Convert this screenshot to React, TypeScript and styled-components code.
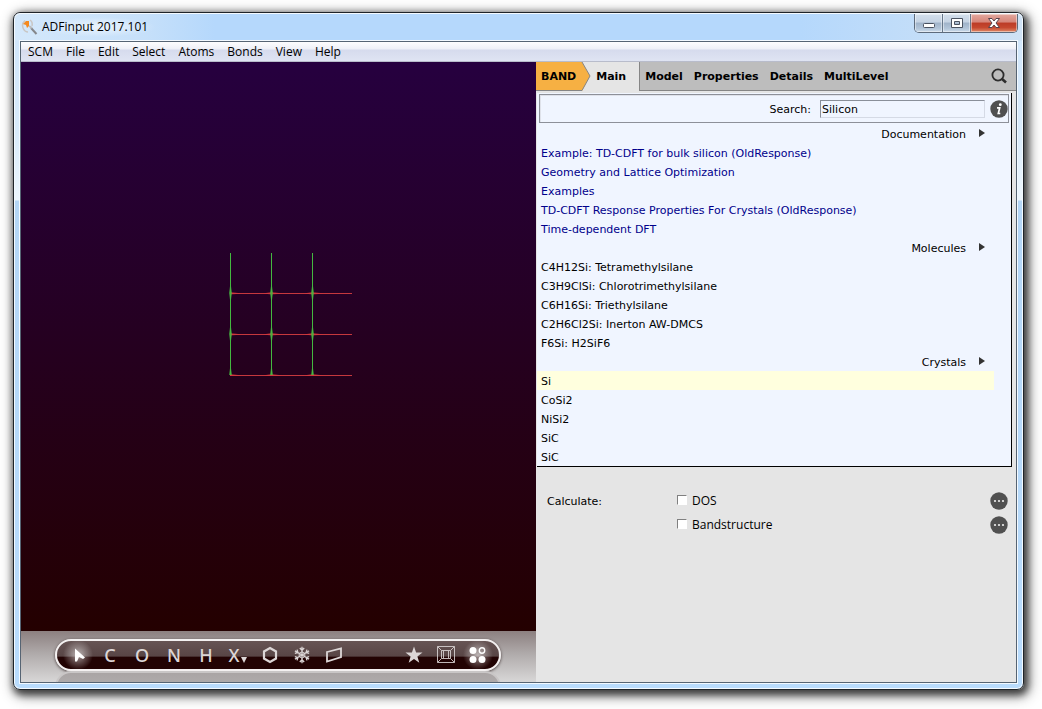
import React, { useState } from 'react';
import styled, { createGlobalStyle, css } from 'styled-components';

const GlobalStyle = createGlobalStyle`
  * { box-sizing: border-box; }
  body { margin: 0; background: #fff; }
  button, input { font: inherit; color: inherit; }
  button { border: 0; padding: 0; background: none; cursor: default; }
  ul { list-style: none; margin: 0; padding: 0; }
`;

const ui = "'Open Sans', 'Noto Sans', sans-serif";
const verdana = "'DejaVu Sans', sans-serif";

const Desktop = styled.div`
  display: flex;
  min-height: 100vh;
  padding: 12px 18px 19px 13px;
  color: #000;
`;

const Window = styled.div`
  flex: 1;
  display: flex;
  flex-direction: column;
  padding: 0 6px 6px;
  border: 1px solid #1f2429;
  border-radius: 7px;
  background: linear-gradient(#cfe5fb 0, #d9ebfb 120px, #edf6fd 187px, #b4d6f6 188px, #b9dcfd 100%);
  box-shadow: inset 0 0 0 1px #f4faff, 2px 3px 7px 2px rgba(0, 0, 0, 0.6), 3px 4px 14px 2px rgba(0, 0, 0, 0.45);
`;

const TitleBar = styled.header`
  display: flex;
  align-items: flex-start;
  height: 28px;
  margin: 0 -5px;
  padding: 0 4px 0 6px;
  border-top: 1px solid #f4faff;
  border-radius: 6px 6px 0 0;
  background: linear-gradient(90deg, #d4e8fb 0, #c6e0fa 130px, #b5d8fc 200px, #b5d8fc 78%, #cfe2f5 100%);
`;

const Title = styled.h1`
  flex: 1;
  display: flex;
  align-items: center;
  gap: 4px;
  margin: 0;
  height: 26px;
  font: 400 12px/20px ${ui};
  span { padding-right: 8px; background: radial-gradient(closest-side, rgba(255,255,255,.6), transparent); }
`;

const WindowButtons = styled.div`
  display: flex;
  height: 19px;
  border: 1px solid #5d6b7c;
  border-top: 0;
  border-radius: 0 0 5px 5px;
  overflow: hidden;
`;

const WindowButton = styled.button<{ $close?: boolean }>`
  display: grid;
  place-items: center;
  width: ${p => (p.$close ? 46 : 28)}px;
  border-right: ${p => (p.$close ? '0' : '1px solid #66778a')};
  background: ${p => p.$close
    ? 'linear-gradient(#e3a99f, #d68579 45%, #bc3b26 50%, #c5482f 75%, #e08a68)'
    : 'linear-gradient(#d3dfec, #c5d3e3 45%, #9fb3c9 50%, #b2c5d9 80%, #cbdbea)'};
  box-shadow: inset 0 0 0 1px rgba(255, 255, 255, 0.45);
`;

const Client = styled.div`
  flex: 1;
  display: flex;
  flex-direction: column;
  border: 1px solid #566473;
  background: #e5e5e5;
  outline: 1px solid #f2f9ff;
`;

const MenuBar = styled.nav`
  display: flex;
  gap: 13px;
  height: 20px;
  padding: 0 7px;
  border-bottom: 1px solid #b8bccb;
  background: linear-gradient(#fdfdfe, #eef0f7 7px, #d6dbed 8px, #dfe4f3);
  font: 12px/19px ${ui};
`;

const Workspace = styled.div`
  flex: 1;
  display: flex;
`;

const Viewer = styled.section`
  flex: 515 1 0;
  display: flex;
  flex-direction: column;
`;

const Scene = styled.div`
  flex: 1;
  display: flex;
  align-items: center;
  justify-content: center;
  padding: 0 0 66px 24px;
  background: linear-gradient(#26003f, #240000);
`;

const ToolArea = styled.div`
  height: 51px;
  padding: 8px 35px 0 34px;
  overflow: hidden;
  background: linear-gradient(#8c8080, #b0abab 45%, #d8d7d7);
`;

const pill = css`
  height: 32px;
  border: 2px solid #f4f1f1;
  border-radius: 16px;
`;

const ToolPill = styled.div`
  ${pill}
  display: flex;
  align-items: center;
  padding: 0 5px;
  background: linear-gradient(#665454, #584545 55%, #220303 56%, #220303);
  box-shadow: 0 1px 3px rgba(30, 15, 15, 0.7);
`;

const PillReflection = styled.div`
  ${pill}
  border-color: #c9c6c6;
  background: linear-gradient(#aaa5a5, #b8b4b4);
`;

const Tool = styled.button<{ $active?: boolean }>`
  display: flex;
  align-items: center;
  justify-content: center;
  flex: 0 0 32px;
  height: 28px;
  color: ${p => (p.$active ? '#fff' : '#dcd6d6')};
  font: 500 18px/28px 'Noto Sans', 'Open Sans', sans-serif;
  ${p => p.$active && 'background: radial-gradient(circle 15px, rgba(255,255,255,.6), rgba(255,255,255,.25) 55%, transparent);'}
`;

const ToolSpacer = styled.div`
  flex: 1;
`;

const Panel = styled.section`
  flex: 480 1 0;
  min-width: 0;
  font: 11px/19px ${verdana};
`;

const TabBar = styled.div`
  display: flex;
  height: 29px;
  background: #bdbdbd;
  border-bottom: 1px solid #858585;
  font-weight: 700;
`;

const Program = styled.button`
  display: flex;
  align-items: center;
  height: 29px;
  background: #e5e5e5;
  span {
    height: 29px;
    padding: 0 2px 0 5px;
    background: #f6b043;
    border-bottom: 1px solid #858585;
    line-height: 29px;
  }
`;

const Tab = styled.button<{ $active?: boolean }>`
  height: ${p => (p.$active ? 29 : 28)}px;
  padding: ${p => (p.$active ? '0 13px 0 5px' : '0 6px 0 5px')};
  ${p => p.$active && 'background: #e5e5e5; border-right: 1px solid #858585;'}
`;

const SearchTab = styled.button`
  margin: 0 9px 0 auto;
  height: 28px;
  svg { display: block; }
`;

const Results = styled.div`
  margin: 2px 4px 0 1px;
  padding-top: 1px;
  border-right: 1px solid #000;
  border-bottom: 1px solid #000;
  background: #f0f5ff;
  line-height: 21px;
`;

const SearchBox = styled.div`
  display: flex;
  align-items: center;
  justify-content: flex-end;
  height: 29px;
  margin: 0 2px 1px;
  border: 1px solid #8d9099;
  box-shadow: inset 1px 1px 0 #dfe2ea;
  label { padding-top: 1px; }
`;

const SearchInput = styled.input`
  width: 165px;
  height: 18px;
  margin: 0 5px 0 9px;
  padding: 1px 1px 0;
  border: 1px solid #d5dae5;
  border-top-color: #8a8f99;
  border-left-color: #8a8f99;
  border-radius: 0;
  background: #f0f5ff;
  line-height: 15px;
  outline: 0;
`;

const RoundButton = styled.button`
  width: 18px;
  height: 18px;
  svg { display: block; }
`;

const GroupTitle = styled.button`
  display: flex;
  align-items: flex-start;
  justify-content: flex-end;
  gap: 12px;
  width: 100%;
  height: 19px;
  padding-right: 25px;
`;

const Entry = styled.li<{ $current?: boolean }>`
  height: 19px;
  margin: 0 17px 0 0;
  padding-left: 4px;
  background: ${p => (p.$current ? '#ffffde' : 'transparent')};
`;

const DocLink = styled.a`
  color: #00008b;
  text-decoration: none;
`;

const Calculate = styled.fieldset`
  display: grid;
  grid-template-columns: 130px 1fr 18px;
  grid-auto-rows: 24px;
  align-items: center;
  margin: 0;
  padding: 22px 8px 0 11px;
  border: 0;
`;

const Check = styled.label`
  grid-column: 2;
  display: flex;
  align-items: center;
  gap: 5px;
  font: 12px/24px ${ui};
`;

const Box = styled.input`
  appearance: none;
  width: 10px;
  height: 10px;
  margin: 0 0 2px;
  border: 1px solid #fff;
  border-top-color: #808080;
  border-left-color: #808080;
  background: #fff;
  &:checked { background: #555; }
`;

const menus = ['SCM', 'File', 'Edit', 'Select', 'Atoms', 'Bonds', 'View', 'Help'];
const tabs = ['Model', 'Properties', 'Details', 'MultiLevel'];

const groups = [
  {
    title: 'Documentation',
    links: true,
    items: [
      'Example: TD-CDFT for bulk silicon (OldResponse)',
      'Geometry and Lattice Optimization',
      'Examples',
      'TD-CDFT Response Properties For Crystals (OldResponse)',
      'Time-dependent DFT',
    ],
  },
  {
    title: 'Molecules',
    items: [
      'C4H12Si: Tetramethylsilane',
      'C3H9ClSi: Chlorotrimethylsilane',
      'C6H16Si: Triethylsilane',
      'C2H6Cl2Si: Inerton AW-DMCS',
      'F6Si: H2SiF6',
    ],
  },
  { title: 'Crystals', items: ['Si', 'CoSi2', 'NiSi2', 'SiC', 'SiC'] },
];

const AppIcon = () => (
  <svg width="17" height="17" viewBox="0 0 17 17" aria-hidden="true">
    <path d="M4 1.500Q0 5 2.500 10Q4 13 7 13" fill="none" stroke="#c9c6c4" strokeWidth="1.500" />
    <path d="M9 1Q12 3 11 7" fill="none" stroke="#c9c6c4" strokeWidth="1.500" />
    <path d="M10 9L15.500 15" stroke="#85878b" strokeWidth="2" />
    <path d="M2 5L5 2H8V7L6 9L5 6Z" fill="#f58a1f" />
    <path d="M8 7L11 9" stroke="#bbb" strokeWidth="2" />
  </svg>
);

const Lattice = () => {
  const stops = [0, 41, 82];
  return (
    <svg width="124" height="124" viewBox="0 0 124 124" aria-label="Unit cell grid">
      {stops.map(s => (
        <g key={s}>
          <path d={`M1 ${s + 41.5}H123`} stroke="#c5383d" />
          <path d={`M${s + 1.5} 1V123`} stroke="#44b840" />
        </g>
      ))}
      {stops.map(x => stops.map(y => (
        <g key={`${x}-${y}`}>
          <path d={`M${Math.max(1, x - 7)} ${y + 41.5}L${x + 1.5} ${y + 40}L${x + 13} ${y + 41.5}L${x + 1.5} ${y + 42.5}Z`} fill="#d8383d" opacity=".65" />
          <path d={`M${x + 1.5} ${y + 31}L${x + 3} ${y + 41}L${x + 1.5} ${Math.min(123, y + 51)}L${x} ${y + 41}Z`} fill="#44b840" opacity=".75" />
        </g>
      )))}
    </svg>
  );
};

const glyph = { width: 18, height: 18, viewBox: '0 0 18 18', fill: 'none', stroke: 'currentColor', 'aria-hidden': true } as const;

const Cursor = () => (
  <svg {...glyph}><path d="M6 2.500L16 11.500L14 13L10 11L8 15.500H6Z" fill="currentColor" stroke="none" /></svg>
);
const Hexagon = () => (
  <svg {...glyph} strokeWidth="2.200"><path d="M9 2L15 5.500V12.500L9 16L3 12.500V5.500Z" /></svg>
);
const Snowflake = () => (
  <svg {...glyph} strokeWidth="1.300">
    {[0, 60, 120, 180, 240, 300].map(a => (
      <path key={a} transform={`rotate(${a} 9 9)`} d="M9 9V.8M6.800 2L9 4.300L11.200 2" />
    ))}
    <path d="M9 5.800L11.800 7.400V10.600L9 12.200L6.200 10.600V7.400Z" strokeWidth="1" />
  </svg>
);
const Plane = () => (
  <svg {...glyph} strokeWidth="1.800"><path d="M2 6L16 2.500V11L2 15.500Z" /></svg>
);
const Star = () => (
  <svg {...glyph}><path d="M9 .5L11.100 6.600H17.500L12.400 10.400L14.300 16.700L9 12.900L3.700 16.700L5.600 10.400L.5 6.600H6.900Z" fill="currentColor" stroke="none" /></svg>
);
const CellIcon = () => (
  <svg {...glyph} opacity=".85"><path d="M.5 .5H17.500V16.500H.5ZM4.500 4.500H13.500V12.500H4.500ZM6.500 5V12M11.500 5V12M.5 .5L4.500 4.500M17.500 .5L13.500 4.500M.5 16.500L4.500 12.500M17.500 16.500L13.500 12.500" /></svg>
);
const Dots = () => (
  <svg {...glyph}>
    <circle cx="4" cy="4.500" r="3.500" fill="currentColor" stroke="none" />
    <circle cx="13" cy="4.500" r="2.700" strokeWidth="1.400" />
    <circle cx="4" cy="13.500" r="3.500" fill="currentColor" stroke="none" />
    <circle cx="13" cy="13.500" r="3.500" fill="currentColor" stroke="none" />
  </svg>
);
const Triangle = () => (
  <svg width="8" height="18" viewBox="0 0 8 18" aria-hidden="true"><path d="M1 11H7L4 17Z" fill="currentColor" /></svg>
);
const Expand = () => (
  <svg width="8" height="19" viewBox="0 -5 8 19" aria-hidden="true"><path d="M1 0L7 4L1 8Z" fill="#333" /></svg>
);
const More = () => (
  <svg width="18" height="18" viewBox="0 0 18 18" aria-hidden="true">
    <circle cx="9" cy="9" r="8.700" fill="#505050" />
    {[5, 9, 13].map(x => <circle key={x} cx={x} cy="9" r="1.100" fill="#eee" />)}
  </svg>
);

export default function App() {
  const [query, setQuery] = useState('Silicon');
  return (
    <>
      <GlobalStyle />
      <Desktop>
        <Window>
          <TitleBar>
            <Title><AppIcon /><span>ADFinput 2017.101</span></Title>
            <WindowButtons>
              <WindowButton aria-label="Minimize">
                <svg width="14" height="12" viewBox="0 0 14 12"><rect x="1.500" y="6.500" width="11" height="4" rx="1" fill="#fff" stroke="#4a5361" /></svg>
              </WindowButton>
              <WindowButton aria-label="Maximize">
                <svg width="14" height="12" viewBox="0 0 14 12"><path d="M1.500 1.500H12.500V10.500H1.500Z M4.500 4.500V7.500H9.500V4.500Z" fill="#fff" fillRule="evenodd" stroke="#4a5361" /></svg>
              </WindowButton>
              <WindowButton $close aria-label="Close">
                <svg width="14" height="12" viewBox="0 0 14 12"><path d="M1.500 1.500H5L7 4L9 1.500H12.500L9 6L12.500 10.500H9L7 8L5 10.500H1.500L5 6Z" fill="#fff" stroke="#57424c" /></svg>
              </WindowButton>
            </WindowButtons>
          </TitleBar>
          <Client>
            <MenuBar>{menus.map(m => <button key={m}>{m}</button>)}</MenuBar>
            <Workspace>
              <Viewer>
                <Scene><Lattice /></Scene>
                <ToolArea>
                  <ToolPill>
                    <Tool $active aria-label="Select"><Cursor /></Tool>
                    {['C', 'O', 'N', 'H'].map(e => <Tool key={e}>{e}</Tool>)}
                    <Tool>X<Triangle /></Tool>
                    <Tool aria-label="Rings"><Hexagon /></Tool>
                    <Tool aria-label="Crystal"><Snowflake /></Tool>
                    <Tool aria-label="Plane"><Plane /></Tool>
                    <ToolSpacer />
                    <Tool aria-label="Structures"><Star /></Tool>
                    <Tool aria-label="Unit cell"><CellIcon /></Tool>
                    <Tool $active aria-label="Periodic view"><Dots /></Tool>
                  </ToolPill>
                  <PillReflection />
                </ToolArea>
              </Viewer>
              <Panel>
                <TabBar>
                  <Program>
                    <span>BAND</span>
                    <svg width="13" height="29" viewBox="0 0 13 29" aria-hidden="true">
                      <path d="M0 0H4L12 14L4 29H0Z" fill="#f6b043" />
                      <path d="M4 0L12 14L4 28.500H0" fill="none" stroke="#858585" />
                    </svg>
                  </Program>
                  <Tab $active>Main</Tab>
                  {tabs.map(t => <Tab key={t}>{t}</Tab>)}
                  <SearchTab aria-label="Search">
                    <svg width="16" height="16" viewBox="0 0 16 16" fill="none" stroke="#2d2d2d">
                      <circle cx="7" cy="7" r="5.600" strokeWidth="1.800" />
                      <path d="M10.500 10.500L15 14.500" strokeWidth="2.600" />
                    </svg>
                  </SearchTab>
                </TabBar>
                <Results>
                  <SearchBox>
                    <label htmlFor="query">Search:</label>
                    <SearchInput id="query" value={query} onChange={e => setQuery(e.target.value)} />
                    <RoundButton aria-label="Information">
                      <svg width="18" height="18" viewBox="0 0 18 18">
                        <circle cx="9" cy="9" r="8.700" fill="#505050" />
                        <circle cx="10.300" cy="4.700" r="1.400" fill="#fff" />
                        <path d="M7 7.800H9.700L8.300 13.500H10.300" fill="none" stroke="#fff" strokeWidth="1.700" />
                      </svg>
                    </RoundButton>
                  </SearchBox>
                  {groups.map(g => (
                    <div key={g.title}>
                      <GroupTitle>{g.title}<Expand /></GroupTitle>
                      <ul>
                        {g.items.map((item, i) => (
                          <Entry key={i} $current={item === 'Si'}>
                            {g.links ? <DocLink href="#">{item}</DocLink> : item}
                          </Entry>
                        ))}
                      </ul>
                    </div>
                  ))}
                </Results>
                <Calculate aria-labelledby="calculate">
                  <span id="calculate">Calculate:</span>
                  <Check><Box type="checkbox" />DOS</Check>
                  <RoundButton aria-label="DOS details"><More /></RoundButton>
                  <Check><Box type="checkbox" />Bandstructure</Check>
                  <RoundButton aria-label="Bandstructure details"><More /></RoundButton>
                </Calculate>
              </Panel>
            </Workspace>
          </Client>
        </Window>
      </Desktop>
    </>
  );
}
